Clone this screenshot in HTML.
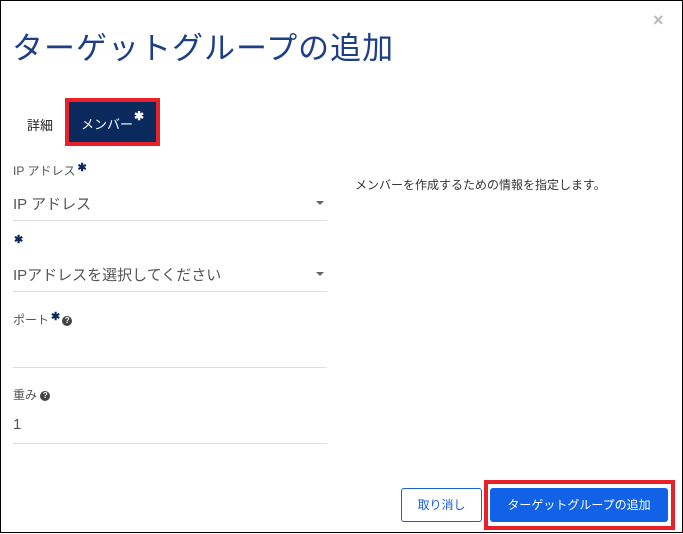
<!DOCTYPE html>
<html><head><meta charset="utf-8"><style>
body{margin:0;width:683px;height:534px;overflow:hidden;background:#fff;font-family:"Liberation Sans","Noto Sans CJK JP",sans-serif;}
.frame{position:absolute;left:0;top:0;width:681px;height:531px;border:1px solid #000;}
.a{position:absolute;white-space:nowrap;}
.line{position:absolute;left:13px;width:314px;height:1px;background:#ddd;}
.lbl{font-size:12px;color:#555;}
.val{font-size:15px;color:#555;}
.star{color:#0a2a5e;font-size:13px;font-weight:bold;}
.caret{position:absolute;left:316px;width:0;height:0;border-left:4px solid transparent;border-right:4px solid transparent;border-top:4px solid #666;}
.q{display:inline-block;width:10px;height:10px;border-radius:50%;background:#444;color:#fff;font-size:8px;line-height:10px;text-align:center;font-weight:bold;vertical-align:1px;}
</style></head><body>
<div class="frame"></div>
<div class="a" style="left:653px;top:10px;font-size:18px;color:#bbb;font-weight:bold;">×</div>
<div class="a" style="left:12px;top:23px;font-size:31px;color:#1e3f88;letter-spacing:1px;">ターゲットグループの追加</div>
<div class="a" style="left:27px;top:115px;font-size:13px;color:#222;">詳細</div>
<div class="a" style="left:65px;top:98px;width:87px;height:40px;border:4px solid #e8202a;background:#0a2a5e;"></div>
<div class="a" style="left:81px;top:114px;font-size:13px;color:#fff;">メンバー</div>
<div class="a" style="left:134px;top:109px;font-size:12px;color:#fff;font-weight:bold;">✱</div>

<div class="a lbl" style="left:13px;top:161px;">IP アドレス<span class="star" style="font-size:11px;vertical-align:4px;margin-left:2px;">✱</span></div>
<div class="a val" style="left:13px;top:193px;">IP アドレス</div>
<div class="caret" style="top:201px;"></div>
<div class="line" style="top:220px;"></div>

<div class="a star" style="left:14px;top:233px;font-size:11px;">✱</div>
<div class="a val" style="left:13px;top:264px;">IPアドレスを選択してください</div>
<div class="caret" style="top:272px;"></div>
<div class="line" style="top:291px;"></div>

<div class="a lbl" style="left:13px;top:310px;">ポート<span class="star" style="font-size:11px;vertical-align:4px;margin:0 2px;">✱</span><span class="q">?</span></div>
<div class="line" style="top:367px;"></div>

<div class="a lbl" style="left:13px;top:386px;">重み <span class="q">?</span></div>
<div class="a val" style="left:13px;top:416px;">1</div>
<div class="line" style="top:443px;"></div>

<div class="a" style="left:355px;top:176px;font-size:12px;color:#333;">メンバーを作成するための情報を指定します。</div>

<div class="a" style="left:401px;top:488px;width:79px;height:32px;border:1px solid #1a5fd6;border-radius:3px;color:#1a5fd6;font-size:12px;line-height:32px;text-align:center;">取り消し</div>
<div class="a" style="left:484px;top:480px;width:183px;height:42px;border:4px solid #e8202a;"></div>
<div class="a" style="left:490px;top:488px;width:178px;height:34px;background:#1162e6;border-radius:3px;color:#fff;font-size:12px;line-height:34px;text-align:center;">ターゲットグループの追加</div>
</body></html>
